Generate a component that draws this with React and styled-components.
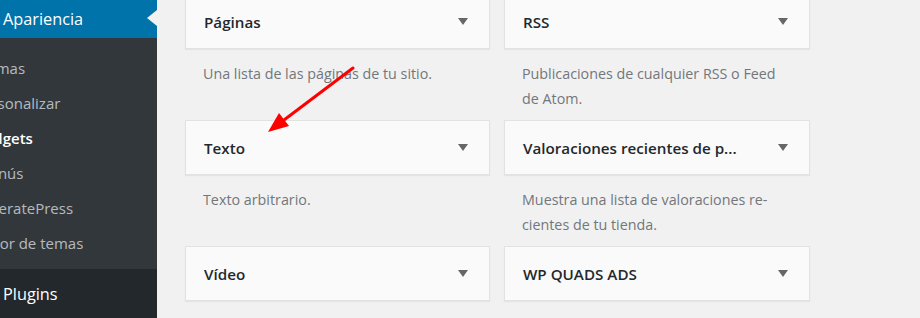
import React from "react";
import styled, { createGlobalStyle } from "styled-components";

const GlobalStyle = createGlobalStyle`
  html, body {
    margin: 0;
    padding: 0;
    background: #f1f1f1;
    overflow: hidden;
  }
  * { box-sizing: border-box; }
`;

const Page = styled.div`
  position: relative;
  display: flex;
  width: 920px;
  height: 318px;
  overflow: hidden;
  font-family: "Open Sans", "Noto Sans", sans-serif;
`;

const Sidebar = styled.nav`
  width: 157px;
  flex-shrink: 0;
  background: #23282d;
  display: flex;
  flex-direction: column;
  overflow: hidden;
`;

const MenuItem = styled.div`
  position: relative;
  height: ${(p) => p.$h}px;
  display: flex;
  align-items: center;
  padding-left: 3px;
  color: #fff;
  font-size: 16.3px;
  background: ${(p) => (p.$active ? "#0073aa" : "#23282d")};
  white-space: nowrap;

  ${(p) =>
    p.$active &&
    `
    &::after {
      content: "";
      position: absolute;
      right: 0;
      top: 10px;
      border-style: solid;
      border-width: 8px 10px 8px 0;
      border-color: transparent #f1f1f1 transparent transparent;
    }
  `}
`;

const Submenu = styled.ul`
  list-style: none;
  margin: 0;
  padding: 13px 0 8px;
  background: #32373c;
`;

const SubItem = styled.li`
  height: 35px;
  line-height: 35px;
  margin-left: ${(p) => p.$shift}px;
  white-space: nowrap;
  font-size: 15px;
  color: ${(p) => (p.$current ? "#fff" : "rgba(240,245,250,0.7)")};
  font-weight: ${(p) => (p.$current ? 600 : 400)};
`;

const Main = styled.main`
  flex: 1;
  padding-left: 28px;
  margin-top: -6px;
`;

const Grid = styled.div`
  display: grid;
  grid-template-columns: 305px 306px;
  column-gap: 14px;
`;

const Column = styled.div`
  display: flex;
  flex-direction: column;
`;

const Card = styled.div`
  height: 55px;
  border: 1px solid #e2e2e2;
  background: #fafafa;
  box-shadow: 0 1px 1px rgba(0, 0, 0, 0.05);
  display: flex;
  align-items: center;
  justify-content: space-between;
  padding: 0 21px 0 18px;
`;

const Title = styled.h3`
  margin: 0;
  font-size: 15.2px;
  font-weight: 600;
  color: #23282d;
  white-space: nowrap;
`;

const Desc = styled.p`
  margin: 0;
  height: 71px;
  padding: 12px 24px 0 18px;
  font-size: 14.3px;
  line-height: 25px;
  color: #72777c;
`;

const Caret = () => (
  <svg width="10" height="7" viewBox="0 0 10 7">
    <path d="M0 0 H10 L5 7 Z" fill="#666" />
  </svg>
);

const Overlay = styled.svg`
  position: absolute;
  left: 0;
  top: 0;
  pointer-events: none;
`;

const left = [
  { title: "Páginas", desc: "Una lista de las páginas de tu sitio." },
  { title: "Texto", desc: "Texto arbitrario." },
  { title: "Vídeo", desc: "" },
];

const right = [
  { title: "RSS", desc: "Publicaciones de cualquier RSS o Feed de Atom." },
  {
    title: "Valoraciones recientes de p...",
    desc: "Muestra una lista de valoraciones re- cientes de tu tienda.",
  },
  { title: "WP QUADS ADS", desc: "" },
];

const sub = [
  { label: "Temas", shift: -21 },
  { label: "Personalizar", shift: -26 },
  { label: "Widgets", shift: -25, current: true },
  { label: "Menús", shift: -24 },
  { label: "GeneratePress", shift: -30 },
  { label: "Editor de temas", shift: -27 },
];

function Widget({ title, desc }) {
  return (
    <div>
      <Card>
        <Title>{title}</Title>
        <Caret />
      </Card>
      <Desc>{desc}</Desc>
    </div>
  );
}

export default function App() {
  return (
    <>
      <GlobalStyle />
      <Page>
        <Sidebar>
          <MenuItem $active $h={38}>
            Apariencia
          </MenuItem>
          <Submenu>
            {sub.map((s) => (
              <SubItem key={s.label} $shift={s.shift} $current={s.current}>
                {s.label}
              </SubItem>
            ))}
          </Submenu>
          <MenuItem $h={49}>Plugins</MenuItem>
        </Sidebar>
        <Main>
          <Grid>
            <Column>
              {left.map((w) => (
                <Widget key={w.title} {...w} />
              ))}
            </Column>
            <Column>
              {right.map((w) => (
                <Widget key={w.title} {...w} />
              ))}
            </Column>
          </Grid>
        </Main>
        <Overlay width="920" height="318" viewBox="0 0 920 318">
          <line x1="353" y1="68" x2="280" y2="123" stroke="#f00" strokeWidth="3" strokeLinecap="round" />
          <path d="M268 132 L289 126 L279 113 Z" fill="#f00" />
        </Overlay>
      </Page>
    </>
  );
}
